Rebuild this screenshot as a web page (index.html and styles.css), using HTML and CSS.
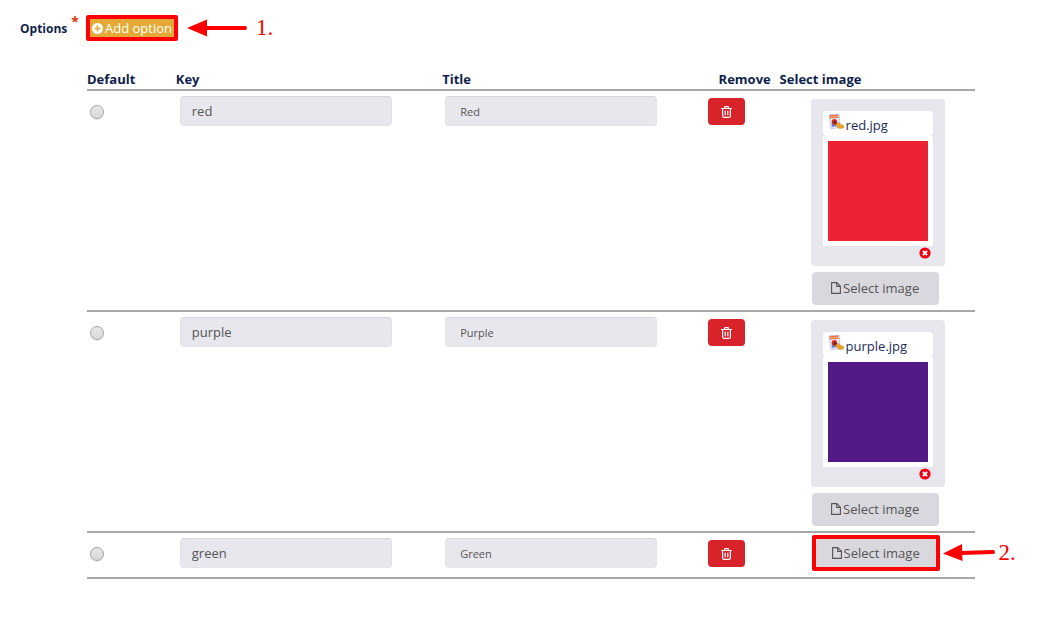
FILE: index.html
```html
<!DOCTYPE html>
<html lang="en">
<head>
    <meta charset="UTF-8">
    <meta name="viewport" content="width=device-width, initial-scale=1.0">
    <title>Options</title>
    <link rel="stylesheet" href="styles.css">
</head>
<body>
    <!-- shared icons -->
    <svg class="sprite" aria-hidden="true">
        <symbol id="trash" viewBox="0 0 11 12">
            <path d="M0 2.500h11M3.500 2.500V1.400q0-.8.8-.8h2.400q.8 0 .8.8v1.100M1.600 2.500v7.500q0 1.400 1.300 1.400h5.200q1.300 0 1.300-1.400V2.500" fill="none" stroke="#fff" stroke-width="1.200"/>
            <path d="M4.200 4.800v4.400M6.800 4.800v4.400" stroke="#fff" stroke-width="1.200"/>
        </symbol>
        <symbol id="file" viewBox="0 0 10 12">
            <path d="M.6.6h5.200l3.600 3.600v7.200H.6zM5.700.7v3.700h3.600" fill="none" stroke="#555" stroke-width="1.100"/>
        </symbol>
        <symbol id="jpg" viewBox="0 0 16 16">
            <path d="M1 1l10-.6 1.300 13L3 14.600z" fill="#edf3ff" stroke="#b9caee"/>
            <path d="M1.500 1l8.800-.5.3 3.600-8.600.3z" fill="#f5743f"/>
            <path d="M3 2.700h1.300M5.500 2.600h1.300M8 2.500h1.300" stroke="#ffd9c8"/>
            <path d="M3.400 10l2.800-1.200 2.600 3-4.600 1.400z" fill="#6f8ad6"/>
            <circle cx="6.400" cy="7.900" r="2.800" fill="#cf2d1f"/>
            <path d="M6 7.500l3 3" stroke="#4a2030" stroke-width="1.600"/>
            <path d="M8.200 9.500l2.200-1.300 1.800 2 3.400 1.400.2 2.200-4.300.8-3.100-2.300z" fill="#eba52c" stroke="#c98a25" stroke-width=".6"/>
        </symbol>
        <symbol id="remove" viewBox="0 0 12 12">
            <circle cx="6" cy="6" r="5.600" fill="#f20012"/>
            <path d="M3.900 3.900l4.200 4.200M8.100 3.900L3.900 8.100" stroke="#fff" stroke-width="2"/>
        </symbol>
    </svg>

    <form class="options">
        <div class="options-bar">
            <span class="options-label">Options<sup class="required">*</sup></span>
            <button type="button" class="add-option">
                <svg class="plus" viewBox="0 0 12 12" aria-hidden="true">
                    <circle cx="6" cy="6" r="6" fill="#fff"/>
                    <path d="M6 2.700v6.600M2.700 6h6.600" stroke="#e4aa35" stroke-width="1.900"/>
                </svg>
                Add option
            </button>
            <svg class="arrow" viewBox="0 0 60 18" aria-hidden="true">
                <path d="M0 9L20 .5v17z" fill="#f00"/>
                <path d="M18 9h40" stroke="#f00" stroke-width="4" stroke-linecap="round"/>
            </svg>
            <span class="step">1.</span>
        </div>

        <table class="options-table">
            <thead>
                <tr>
                    <th class="col-default">Default</th>
                    <th class="col-text">Key</th>
                    <th class="col-text">Title</th>
                    <th class="col-remove">Remove</th>
                    <th>Select image</th>
                </tr>
            </thead>
            <tbody>
                <tr>
                    <td><input type="radio" class="default-radio" name="default" aria-label="Default red"></td>
                    <td><input type="text" class="field key" value="red" aria-label="Key"></td>
                    <td><input type="text" class="field title" value="Red" aria-label="Title"></td>
                    <td><button type="button" class="trash" aria-label="Remove red"><svg><use href="#trash"/></svg></button></td>
                    <td class="image-cell">
                        <div class="card">
                            <a class="file-name" href="#"><svg><use href="#jpg"/></svg>red.jpg</a>
                            <div class="thumb"><div class="swatch red"></div></div>
                            <button type="button" class="card-remove" aria-label="Remove image"><svg><use href="#remove"/></svg></button>
                        </div>
                        <button type="button" class="select-image"><svg><use href="#file"/></svg>Select image</button>
                    </td>
                </tr>
                <tr>
                    <td><input type="radio" class="default-radio" name="default" aria-label="Default purple"></td>
                    <td><input type="text" class="field key" value="purple" aria-label="Key"></td>
                    <td><input type="text" class="field title" value="Purple" aria-label="Title"></td>
                    <td><button type="button" class="trash" aria-label="Remove purple"><svg><use href="#trash"/></svg></button></td>
                    <td class="image-cell">
                        <div class="card">
                            <a class="file-name" href="#"><svg><use href="#jpg"/></svg>purple.jpg</a>
                            <div class="thumb"><div class="swatch purple"></div></div>
                            <button type="button" class="card-remove" aria-label="Remove image"><svg><use href="#remove"/></svg></button>
                        </div>
                        <button type="button" class="select-image"><svg><use href="#file"/></svg>Select image</button>
                    </td>
                </tr>
                <tr>
                    <td><input type="radio" class="default-radio" name="default" aria-label="Default green"></td>
                    <td><input type="text" class="field key" value="green" aria-label="Key"></td>
                    <td><input type="text" class="field title" value="Green" aria-label="Title"></td>
                    <td><button type="button" class="trash" aria-label="Remove green"><svg><use href="#trash"/></svg></button></td>
                    <td class="image-cell marked">
                        <button type="button" class="select-image"><svg><use href="#file"/></svg>Select image</button>
                        <div class="note">
                            <svg class="arrow short" viewBox="0 0 52 18" aria-hidden="true">
                                <path d="M0 9.500L19 0l.5 17z" fill="#f00"/>
                                <path d="M18 9l32-1" stroke="#f00" stroke-width="4" stroke-linecap="round"/>
                            </svg>
                            <span class="step">2.</span>
                        </div>
                    </td>
                </tr>
            </tbody>
        </table>
    </form>
</body>
</html>
```

FILE: styles.css
```css
* {
    box-sizing: border-box;
}
body {
    margin: 0;
    background-color: #fff;
    color: #0f1f4b;
    font-family: "Open Sans", sans-serif;
    font-size: 13px;
}
button, input {
    font-family: inherit;
    font-size: 13px;
    margin: 0;
}
button {
    cursor: pointer;
}
svg {
    display: block;
    flex: none;
}
.sprite {
    position: absolute;
    width: 0;
    height: 0;
}
.options {
    padding: 13px 71px 0 20px;
}
.options-bar {
    display: flex;
    align-items: center;
    height: 30px;
}
.options-label {
    display: flex;
    align-items: center;
    justify-content: space-between;
    width: 59px;
    margin-right: 7px;
    font-size: 12px;
    font-weight: bold;
}
.required {
    color: #d9330f;
    font-size: 14px;
    line-height: 12px;
    padding-bottom: 12px;
}
.add-option {
    display: flex;
    align-items: center;
    gap: 2px;
    height: 26px;
    padding: 0 2px;
    border: 4px solid #f00;
    border-radius: 2px;
    background-color: #e4aa35;
    color: #fff;
    white-space: nowrap;
}
.plus {
    width: 11px;
    height: 11px;
}
.arrow {
    width: 60px;
    height: 18px;
    margin-left: 9px;
}
.step {
    margin-left: 9px;
    color: #f00;
    font-family: "Liberation Serif", serif;
    font-size: 23px;
    line-height: 24px;
}

/* table */
.options-table {
    width: calc(100% - 67px);
    margin: 27px 0 0 67px;
    border-collapse: separate;
    border-spacing: 0;
    table-layout: fixed;
}
th, td {
    padding: 0;
    border-bottom: 2px solid #a8a8a8;
    text-align: left;
    vertical-align: top;
}
th {
    height: 21px;
    line-height: 18px;
    white-space: nowrap;
}
.col-default {
    width: 10%;
}
.col-text {
    width: 30%;
}
.col-remove {
    width: 8%;
    padding-left: 10px;
}
.default-radio {
    appearance: none;
    display: block;
    width: 14px;
    height: 14px;
    margin: 14px 0 0 3px;
    border: 1px solid #a6a6a6;
    border-radius: 50%;
    background: linear-gradient(#e8e8e8, #d8d8d8);
    box-shadow: 0 1px 1px #e4e4e4;
}
.default-radio:checked {
    background: #555;
}
.field {
    display: block;
    width: calc(80% - 1px);
    height: 30px;
    margin: 5px 0 0 4px;
    border: 1px solid #e3e2e9;
    border-top-color: #d5d4dc;
    border-radius: 4px;
    background-color: #e8e7ed;
    color: #555;
}
.key {
    padding: 0 11px;
}
.title {
    padding: 0 14px;
    font-size: 11px;
    margin-left: 3px;
}
.trash {
    display: flex;
    align-items: center;
    justify-content: center;
    width: 37px;
    height: 27px;
    margin: 7px 0 0 -1px;
    padding: 0;
    border: none;
    border-radius: 4px;
    background-color: #d9232b;
}
.trash svg {
    width: 11px;
    height: 12px;
}

/* image column */
.image-cell {
    position: relative;
    padding: 8px 0 5px 31px;
}
.card {
    width: 134px;
    margin-bottom: 6px;
    padding: 12px 12px 6px;
    border-radius: 4px;
    background-color: #e8e7ed;
}
.file-name {
    display: flex;
    align-items: center;
    gap: 2px;
    height: 25px;
    padding: 2px 5px 0;
    border-radius: 4px;
    background-color: #fff;
    color: #1c2b5a;
    text-decoration: none;
}
.file-name svg {
    width: 16px;
    height: 16px;
    margin-bottom: 6px;
}
.thumb {
    padding: 5px;
    background-color: #fff;
}
.swatch {
    height: 100px;
}
.red {
    background-color: #ed2334;
}
.purple {
    background-color: #511a87;
}
.card-remove {
    display: block;
    margin: 1px 2px 1px auto;
    padding: 0;
    border: none;
    background: none;
}
.card-remove svg {
    width: 12px;
    height: 12px;
}
.select-image {
    display: flex;
    align-items: center;
    justify-content: center;
    gap: 2px;
    width: 127px;
    height: 33px;
    margin-left: 1px;
    padding: 0 0 1px;
    border: none;
    border-radius: 4px;
    background-color: #d9d8df;
    color: #555;
}
.select-image svg {
    width: 10px;
    height: 12px;
}
.marked {
    padding: 2px 0 6px 31px;
}
.marked .select-image {
    width: 128px;
    height: 36px;
    padding: 0;
    border: 4px solid #f00;
    border-radius: 2px;
}
.note {
    position: absolute;
    top: 8px;
    left: 163px;
    display: flex;
    align-items: center;
}
.short {
    width: 52px;
    margin-left: 0;
}
.note .step {
    margin-left: 4px;
}
```
